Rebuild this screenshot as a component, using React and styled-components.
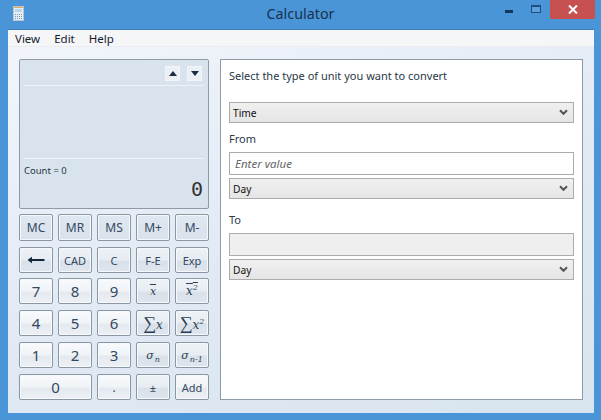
import React from "react";
import styled, { createGlobalStyle } from "styled-components";

const GlobalStyle = createGlobalStyle`
  html, body {
    margin: 0;
    padding: 0;
    background: #4a95d8;
  }
  * {
    box-sizing: border-box;
  }
`;

const Window = styled.div`
  width: 601px;
  height: 420px;
  overflow: hidden;
  display: flex;
  flex-direction: column;
  background: #4a95d8;
  font-family: "Noto Sans", "Open Sans", sans-serif;
`;

const TitleBar = styled.div`
  height: 29px;
  flex: none;
  display: grid;
  grid-template-columns: 1fr auto 1fr;
  padding: 0 6px;
`;

const AppIcon = styled.svg`
  width: 11px;
  height: 15px;
  margin: 6px 0 0 7px;
`;

const Title = styled.div`
  font-size: 14.3px;
  line-height: 28px;
  color: #17314f;
`;

const Controls = styled.div`
  display: flex;
  justify-content: flex-end;
  align-items: flex-start;
`;

const MinButton = styled.div`
  width: 8px;
  height: 3px;
  margin: 10px 18px 0 0;
  background: #12365c;
`;

const MaxButton = styled.div`
  width: 10px;
  height: 8px;
  margin: 5px 9px 0 0;
  border: 1px solid #1d4f80;
  border-top-width: 2px;
  background: #5d9fdc;
`;

const CloseButton = styled.div`
  width: 45px;
  height: 19px;
  background: #c75050;
  display: flex;
  align-items: center;
  justify-content: center;
`;

const Client = styled.div`
  flex: 1;
  margin: 0 7px 7px 8px;
  display: flex;
  flex-direction: column;
  background: linear-gradient(160deg, #f3f6fc 0%, #e3ebf5 45%, #d8e4ee 100%);
  border-top: 1px solid #3f7fb8;
`;

const MenuBar = styled.div`
  height: 17px;
  flex: none;
  display: flex;
  gap: 14px;
  padding-left: 7px;
  background: #f5f6f8;
  border-bottom: 1px solid #e9ecf1;
`;

const MenuItem = styled.div`
  font-size: 11.5px;
  line-height: 18px;
  color: #16202c;
`;

const Body = styled.div`
  flex: 1;
  display: flex;
  gap: 11px;
  padding: 12px 11px 13px;
`;

const LeftColumn = styled.div`
  width: 190px;
  display: flex;
  flex-direction: column;
  gap: 5px;
`;

const Display = styled.div`
  height: 150px;
  display: flex;
  flex-direction: column;
  border: 1px solid #8e9aa6;
  border-radius: 2px;
  background: #d9e3ed;
  padding: 0 4px;
`;

const HistoryBar = styled.div`
  height: 26px;
  flex: none;
  display: flex;
  justify-content: flex-end;
  align-items: flex-start;
  gap: 7px;
  padding: 6px 2px 0 0;
  border-bottom: 1px solid #eef3f8;
`;

const ArrowButton = styled.div`
  width: 15px;
  height: 15px;
  display: flex;
  align-items: center;
  justify-content: center;
  background: #eaf0f6;
  border: 1px solid #f2f5f9;
`;

const Triangle = styled.div`
  width: 0;
  height: 0;
  border-left: 4px solid transparent;
  border-right: 4px solid transparent;
  border-${props => (props.$up ? "bottom" : "top")}: 5px solid #1c2c3d;
`;

const HistoryArea = styled.div`
  height: 73px;
  flex: none;
  border-bottom: 1px solid #eef3f8;
`;

const CountText = styled.div`
  font-size: 9.5px;
  line-height: 13px;
  margin-top: 5px;
  color: #2b3744;
`;

const Result = styled.div`
  font-family: "DejaVu Sans Mono", monospace;
  font-size: 20px;
  line-height: 24px;
  padding-right: 1px;
  text-align: right;
  color: #333;
`;

const Keypad = styled.div`
  display: grid;
  grid-template-columns: repeat(5, 34px);
  grid-auto-rows: 26px;
  column-gap: 5px;
  row-gap: 6px;
`;

const TopKeypad = styled(Keypad)`
  grid-template-rows: 27px 26px;
`;

const Key = styled.div`
  grid-column: span ${props => props.$span || 1};
  display: flex;
  align-items: center;
  justify-content: center;
  border: 1px solid #8b97a3;
  border-radius: 2px;
  box-shadow: inset 0 0 0 1px #f6f9fc;
  color: #34495f;
  font-size: ${props => props.$size || 12}px;
  background: ${props =>
    props.$kind === "digit"
      ? "linear-gradient(180deg, #f8fafc 0%, #f1f4f7 50%, #e4e9ef 55%, #edf1f5 100%)"
      : props.$kind === "memory"
      ? "linear-gradient(180deg, #dfe7f0 0%, #d9e2ec 100%)"
      : "linear-gradient(180deg, #eef2f7 0%, #e6ecf2 50%, #d8e0e9 55%, #dfe6ee 100%)"};
`;

const MathText = styled.span`
  font-family: "DejaVu Serif", serif;
  font-style: italic;
  font-size: ${props => props.$size || 13}px;
  white-space: nowrap;
  color: #2c3e52;
`;

const BigSigma = styled.span`
  font-family: "Liberation Serif", serif;
  font-style: normal;
  font-size: 18px;
`;

const Overline = styled.span`
  text-decoration: overline;
`;

const Sup = styled.sup`
  font-size: 8px;
  line-height: 0;
`;

const Sub = styled.sub`
  font-size: 8px;
  line-height: 0;
  margin-left: 1px;
`;

const Converter = styled.div`
  flex: 1;
  display: flex;
  flex-direction: column;
  padding: 8px 8px 0;
  background: #fff;
  border: 1px solid #8e9aa6;
`;

const Heading = styled.div`
  font-size: 11px;
  line-height: 16px;
  color: #2b3846;
`;

const FieldLabel = styled.div`
  font-size: 11px;
  line-height: 16px;
  margin-top: ${props => props.$top}px;
  color: #2b3846;
`;

const SelectBox = styled.div`
  height: 21px;
  flex: none;
  margin-top: ${props => props.$top}px;
  display: flex;
  align-items: center;
  justify-content: space-between;
  padding: 0 5px 0 3px;
  border: 1px solid #acacac;
  background: linear-gradient(180deg, #f0f0f0 0%, #e5e5e5 100%);
  font-size: 10.2px;
  color: #111;
`;

const ValueInput = styled.input`
  height: 23px;
  flex: none;
  margin-top: 5px;
  padding: 0 5px;
  border: 1px solid #acacac;
  outline: none;
  background: ${props => (props.disabled ? "#efefef" : "#fff")};
  font-family: inherit;
  font-size: 11.5px;
  font-style: italic;

  &::placeholder {
    color: #666;
    opacity: 1;
  }
`;

const Chevron = () => (
  <svg width="9" height="7" viewBox="0 0 9 7">
    <path d="M1 1.2 L4.5 4.8 L8 1.2" fill="none" stroke="#555" strokeWidth="2" />
  </svg>
);

const Select = ({ value, top }) => (
  <SelectBox $top={top}>
    {value}
    <Chevron />
  </SelectBox>
);

const topKeys = [
  { label: "MC", kind: "memory" },
  { label: "MR", kind: "memory" },
  { label: "MS", kind: "memory" },
  { label: "M+", kind: "memory" },
  { label: "M-", kind: "memory" },
  {
    label: (
      <svg width="18" height="8" viewBox="0 0 18 8">
        <path d="M0.5 4 L5 0.8 V3 H17.5 V5 H5 V7.2 Z" fill="#14263a" />
      </svg>
    ),
  },
  { label: "CAD", size: 11 },
  { label: "C", size: 11 },
  { label: "F-E", size: 11 },
  { label: "Exp", size: 11 },
];

const lowerKeys = [
  { label: "7", kind: "digit", size: 15 },
  { label: "8", kind: "digit", size: 15 },
  { label: "9", kind: "digit", size: 15 },
  { label: <MathText $size={11}><Overline>x</Overline></MathText> },
  { label: <MathText $size={12}><Overline>x<Sup>2</Sup></Overline></MathText> },
  { label: "4", kind: "digit", size: 15 },
  { label: "5", kind: "digit", size: 15 },
  { label: "6", kind: "digit", size: 15 },
  { label: <MathText $size={12}><BigSigma>∑</BigSigma>x</MathText> },
  { label: <MathText $size={12}><BigSigma>∑</BigSigma>x<Sup>2</Sup></MathText> },
  { label: "1", kind: "digit", size: 15 },
  { label: "2", kind: "digit", size: 15 },
  { label: "3", kind: "digit", size: 15 },
  { label: <MathText $size={11}>σ<Sub>n</Sub></MathText> },
  { label: <MathText $size={11}>σ<Sub>n-1</Sub></MathText> },
  { label: "0", kind: "digit", size: 15, span: 2 },
  { label: ".", kind: "digit" },
  { label: "±", size: 11 },
  { label: "Add", size: 11, kind: "digit" },
];

const renderKeys = list =>
  list.map((k, i) => (
    <Key key={i} $kind={k.kind} $size={k.size} $span={k.span}>
      {k.label}
    </Key>
  ));

const App = () => (
  <Window>
    <GlobalStyle />
    <TitleBar>
      <AppIcon viewBox="0 0 11 15">
        <rect x="0.5" y="0.5" width="10" height="14" fill="#e6eef6" stroke="#b9c6d4" />
        <rect x="1" y="1" width="9" height="1" fill="#e8a85a" />
        <rect x="2" y="3" width="7" height="3" fill="#bcd6ef" />
        <path d="M2 8.5 H9 M2 10.5 H9 M2 12.5 H9" stroke="#7f95ad" strokeDasharray="1 1" />
      </AppIcon>
      <Title>Calculator</Title>
      <Controls>
        <MinButton />
        <MaxButton />
        <CloseButton>
          <svg width="10" height="9" viewBox="0 0 10 9">
            <path d="M1 0.5 L9 8.5 M9 0.5 L1 8.5" stroke="#fff" strokeWidth="2" />
          </svg>
        </CloseButton>
      </Controls>
    </TitleBar>
    <Client>
      <MenuBar>
        <MenuItem>View</MenuItem>
        <MenuItem>Edit</MenuItem>
        <MenuItem>Help</MenuItem>
      </MenuBar>
      <Body>
        <LeftColumn>
          <Display>
            <HistoryBar>
              <ArrowButton><Triangle $up /></ArrowButton>
              <ArrowButton><Triangle /></ArrowButton>
            </HistoryBar>
            <HistoryArea />
            <CountText>Count = 0</CountText>
            <Result>0</Result>
          </Display>
          <TopKeypad>{renderKeys(topKeys)}</TopKeypad>
          <Keypad>{renderKeys(lowerKeys)}</Keypad>
        </LeftColumn>
        <Converter>
          <Heading>Select the type of unit you want to convert</Heading>
          <Select value="Time" top={18} />
          <FieldLabel $top={8}>From</FieldLabel>
          <ValueInput placeholder="Enter value" />
          <Select value="Day" top={3} />
          <FieldLabel $top={13}>To</FieldLabel>
          <ValueInput disabled />
          <Select value="Day" top={3} />
        </Converter>
      </Body>
    </Client>
  </Window>
);

export default App;
